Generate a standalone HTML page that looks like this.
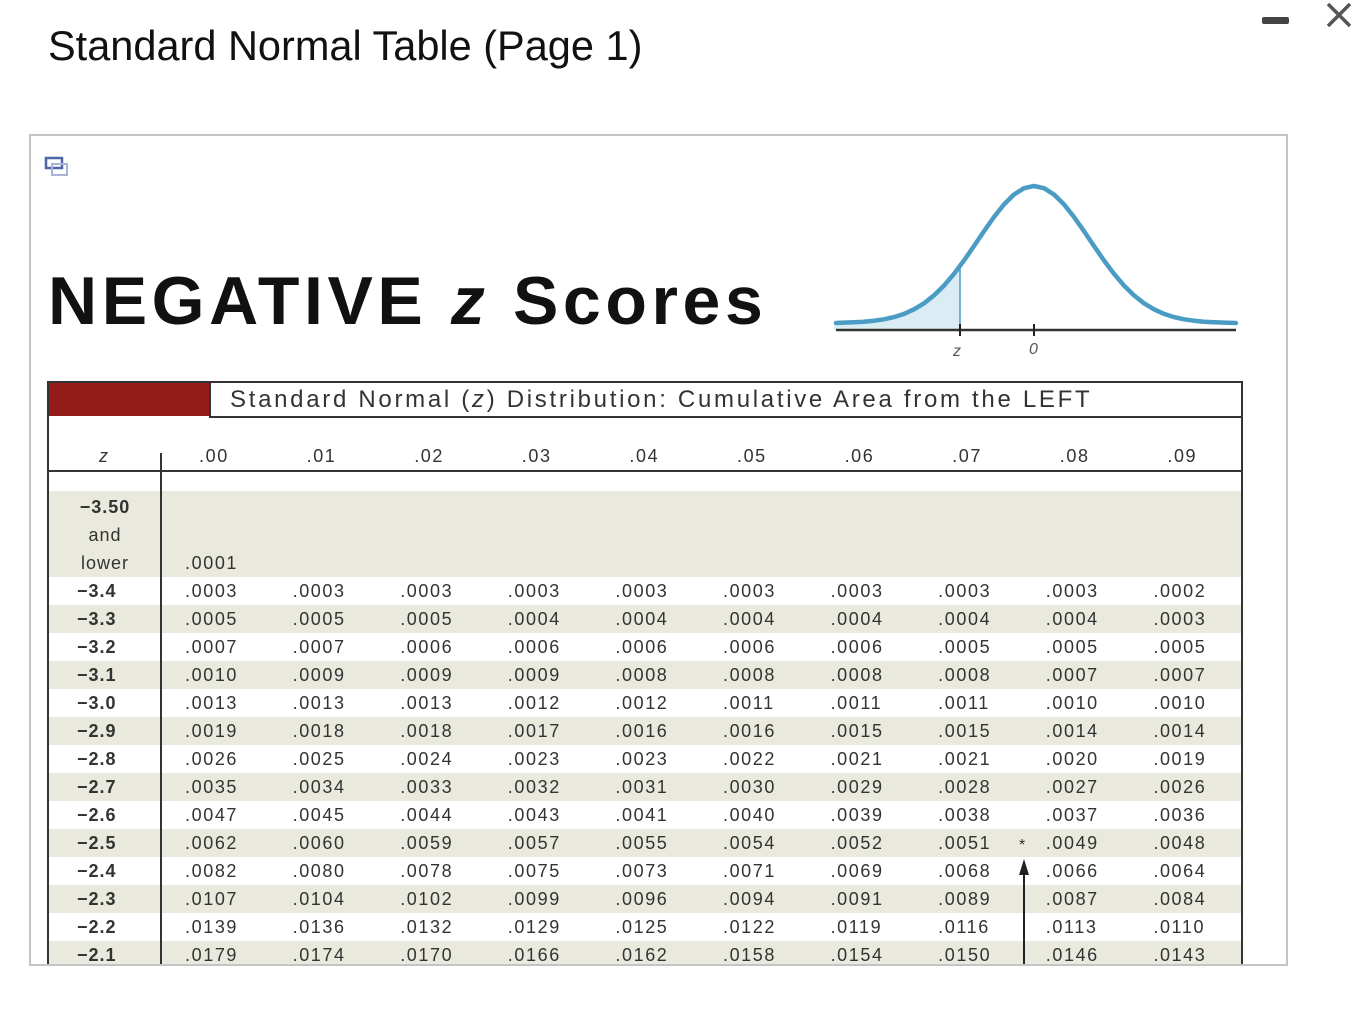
<!DOCTYPE html>
<html><head><meta charset="utf-8"><style>
*{margin:0;padding:0;box-sizing:border-box}
body{width:1352px;height:1024px;background:#fff;position:relative;overflow:hidden;font-family:"Liberation Sans",sans-serif}
.title{position:absolute;left:48px;top:22px;font-size:41.5px;color:#111;white-space:nowrap}
.box{position:absolute;left:29px;top:134px;width:1259px;height:832px;border:2px solid #c4c4c4;overflow:hidden}
.abs{position:absolute}
.neg{position:absolute;left:17px;top:126px;font-size:68px;font-weight:bold;color:#111;letter-spacing:4.6px;white-space:nowrap}
.tbl{position:absolute;left:16px;top:245px;width:1196px;height:620px;border:2px solid #333;border-bottom:none}
.red{position:absolute;left:0;top:0;width:160px;height:33px;background:#941c18}
.band{position:absolute;left:160px;top:0;right:0;height:35px;border-left:2px solid #333;border-bottom:2px solid #333;font-size:24px;color:#333;padding-left:19px;line-height:33px;letter-spacing:2.7px;white-space:nowrap}
.hdr{position:absolute;left:0;top:33px;right:0;height:56px;border-bottom:2px solid #333}
.row{position:absolute;left:0;right:0;height:28px;display:grid;grid-template-columns:112px repeat(10,107.6px);font-size:18px;color:#333;line-height:28px;letter-spacing:1.6px;white-space:nowrap}
.row span{padding-left:24px}
.row span:first-child{padding-left:28px;font-weight:bold;letter-spacing:1px}
.sh{background:#eae9de}
.div{position:absolute;left:111px;top:70px;width:2px;height:600px;background:#333}
</style></head><body>
<div class="title">Standard Normal Table (Page 1)</div>
<svg class="abs" style="left:1258px;top:0" width="94" height="40"><rect x="4" y="17" width="27" height="7" rx="2" fill="#444"/><path d="M70 4L92 26M92 4L70 26" stroke="#555" stroke-width="3.5"/></svg>
<div class="box">
<svg class="abs" style="left:13px;top:20px" width="28" height="24"><rect x="2" y="2" width="16" height="10" fill="none" stroke="#5166a8" stroke-width="2.5"/><rect x="8" y="8" width="15" height="11" fill="none" stroke="#a8b4d8" stroke-width="2"/></svg>
<div class="neg">NEGATIVE <i style="font-weight:bold">z</i> Scores</div>
<svg class="abs" style="left:-31px;top:-136px" width="1320" height="500">
<polygon points="834,330 834,323 854,322.2 874,320.7 884,319.3 894,317.1 904,313.9 914,309.3 924,303.3 934,295.4 944,285.6 954,273.8 960,266 960,330" fill="#daedf5"/>
<line x1="960" y1="266" x2="960" y2="330" stroke="#4a9cc4" stroke-width="1.5"/>
<line x1="836" y1="330" x2="1236" y2="330" stroke="#333" stroke-width="2.5"/>
<line x1="960" y1="324" x2="960" y2="336" stroke="#222" stroke-width="2"/>
<line x1="1034" y1="324" x2="1034" y2="336" stroke="#222" stroke-width="2"/>
<polyline points="836,323 844,322.6 854,322.2 864,321.7 874,320.7 884,319.3 894,317.1 904,313.9 914,309.3 924,303.3 934,295.4 944,285.6 954,273.8 964,260.5 974,246 984,231.2 994,217 1004,204.4 1014,194.5 1024,188.2 1034,186 1044,188.2 1054,194.5 1064,204.4 1074,217 1084,231.2 1094,246 1104,260.5 1114,273.8 1124,285.6 1134,295.4 1144,303.3 1154,309.3 1164,313.9 1174,317.1 1184,319.3 1194,320.7 1204,321.7 1214,322.2 1224,322.6 1236,323" fill="none" stroke="#4a9cc4" stroke-width="4.5" stroke-linejoin="round" stroke-linecap="round"/>
<text x="953" y="356" font-size="16" font-style="italic" fill="#555" font-family="Liberation Sans">z</text>
<text x="1029" y="354" font-size="16" font-style="italic" fill="#555" font-family="Liberation Sans">0</text>
</svg>
<div class="tbl">
<div class="red"></div>
<div class="band">Standard Normal (<i>z</i>) Distribution: Cumulative Area from the LEFT</div>
<div class="hdr"><div class="row" style="top:26px;font-weight:normal"><span style="padding-left:50px;font-style:italic;font-weight:normal">z</span><span style="padding-left:38px">.00</span><span style="padding-left:38px">.01</span><span style="padding-left:38px">.02</span><span style="padding-left:38px">.03</span><span style="padding-left:38px">.04</span><span style="padding-left:38px">.05</span><span style="padding-left:38px">.06</span><span style="padding-left:38px">.07</span><span style="padding-left:38px">.08</span><span style="padding-left:38px">.09</span></div></div>
<div class="sh abs" style="left:0;right:0;top:108px;height:86px"></div>
<div class="abs" style="left:0;width:112px;top:110px;font-size:18px;color:#333;line-height:28px;text-align:center;letter-spacing:1px"><b>−3.50</b><br>and<br>lower</div>
<div class="row" style="top:166px"><span></span><span>.0001</span></div>
<div class="row" style="top:194px"><span>−3.4</span><span>.0003</span><span>.0003</span><span>.0003</span><span>.0003</span><span>.0003</span><span>.0003</span><span>.0003</span><span>.0003</span><span>.0003</span><span>.0002</span></div>
<div class="row sh" style="top:222px"><span>−3.3</span><span>.0005</span><span>.0005</span><span>.0005</span><span>.0004</span><span>.0004</span><span>.0004</span><span>.0004</span><span>.0004</span><span>.0004</span><span>.0003</span></div>
<div class="row" style="top:250px"><span>−3.2</span><span>.0007</span><span>.0007</span><span>.0006</span><span>.0006</span><span>.0006</span><span>.0006</span><span>.0006</span><span>.0005</span><span>.0005</span><span>.0005</span></div>
<div class="row sh" style="top:278px"><span>−3.1</span><span>.0010</span><span>.0009</span><span>.0009</span><span>.0009</span><span>.0008</span><span>.0008</span><span>.0008</span><span>.0008</span><span>.0007</span><span>.0007</span></div>
<div class="row" style="top:306px"><span>−3.0</span><span>.0013</span><span>.0013</span><span>.0013</span><span>.0012</span><span>.0012</span><span>.0011</span><span>.0011</span><span>.0011</span><span>.0010</span><span>.0010</span></div>
<div class="row sh" style="top:334px"><span>−2.9</span><span>.0019</span><span>.0018</span><span>.0018</span><span>.0017</span><span>.0016</span><span>.0016</span><span>.0015</span><span>.0015</span><span>.0014</span><span>.0014</span></div>
<div class="row" style="top:362px"><span>−2.8</span><span>.0026</span><span>.0025</span><span>.0024</span><span>.0023</span><span>.0023</span><span>.0022</span><span>.0021</span><span>.0021</span><span>.0020</span><span>.0019</span></div>
<div class="row sh" style="top:390px"><span>−2.7</span><span>.0035</span><span>.0034</span><span>.0033</span><span>.0032</span><span>.0031</span><span>.0030</span><span>.0029</span><span>.0028</span><span>.0027</span><span>.0026</span></div>
<div class="row" style="top:418px"><span>−2.6</span><span>.0047</span><span>.0045</span><span>.0044</span><span>.0043</span><span>.0041</span><span>.0040</span><span>.0039</span><span>.0038</span><span>.0037</span><span>.0036</span></div>
<div class="row sh" style="top:446px"><span>−2.5</span><span>.0062</span><span>.0060</span><span>.0059</span><span>.0057</span><span>.0055</span><span>.0054</span><span>.0052</span><span>.0051</span><span>.0049</span><span>.0048</span></div>
<div class="row" style="top:474px"><span>−2.4</span><span>.0082</span><span>.0080</span><span>.0078</span><span>.0075</span><span>.0073</span><span>.0071</span><span>.0069</span><span>.0068</span><span>.0066</span><span>.0064</span></div>
<div class="row sh" style="top:502px"><span>−2.3</span><span>.0107</span><span>.0104</span><span>.0102</span><span>.0099</span><span>.0096</span><span>.0094</span><span>.0091</span><span>.0089</span><span>.0087</span><span>.0084</span></div>
<div class="row" style="top:530px"><span>−2.2</span><span>.0139</span><span>.0136</span><span>.0132</span><span>.0129</span><span>.0125</span><span>.0122</span><span>.0119</span><span>.0116</span><span>.0113</span><span>.0110</span></div>
<div class="row sh" style="top:558px"><span>−2.1</span><span>.0179</span><span>.0174</span><span>.0170</span><span>.0166</span><span>.0162</span><span>.0158</span><span>.0154</span><span>.0150</span><span>.0146</span><span>.0143</span></div>
<div class="div"></div>
<svg class="abs" style="left:965px;top:450px" width="30" height="140"><text x="5" y="17" font-size="16" fill="#333" font-family="Liberation Sans">*</text><line x1="10" y1="34" x2="10" y2="140" stroke="#222" stroke-width="2"/><polygon points="10,26 5,42 15,42" fill="#222"/></svg>
</div>
</div>
</body></html>
